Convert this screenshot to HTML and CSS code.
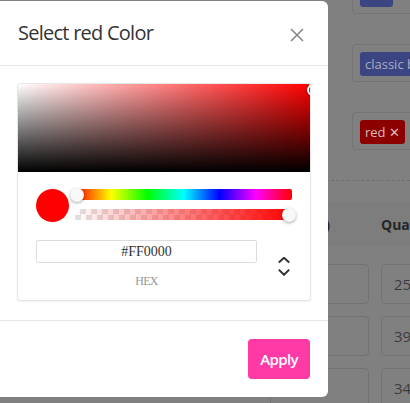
FILE: index.html
```html
<!DOCTYPE html>
<html lang="en">
<head>
<meta charset="utf-8">
<title>Select Color</title>
<link rel="stylesheet" href="styles.css">
</head>
<body>
<div class="page">
  <div class="tag-list">
    <div class="tag-card first"><span class="tag tag-blue">size</span></div>
    <div class="tag-card"><span class="tag tag-blue">classic blue</span></div>
    <div class="tag-card"><span class="tag tag-red">red ✕</span></div>
  </div>
  <div class="divider"></div>
  <div class="variant-table">
    <div class="thead">
      <div class="th">Price ($)</div>
      <div class="th">Quantity</div>
    </div>
    <div class="trow"><div class="cell"></div><div class="cell">25</div></div>
    <div class="trow"><div class="cell"></div><div class="cell">39</div></div>
    <div class="trow"><div class="cell"></div><div class="cell">34</div></div>
  </div>
</div>

<div class="modal">
  <div class="modal-header">
    <h5 class="modal-title">Select red Color</h5>
    <button class="close-btn" aria-label="Close">
      <svg width="14" height="14" viewBox="0 0 14 14"><path d="M1 1 L13 13 M13 1 L1 13" stroke="#8a8a8a" stroke-width="1.7" fill="none"/></svg>
    </button>
  </div>
  <div class="modal-body">
    <div class="picker">
      <div class="saturation"><span class="sat-cursor"></span></div>
      <div class="controls">
        <div class="slider-row">
          <div class="swatch"></div>
          <div class="sliders">
            <div class="hue"><span class="thumb thumb-left"></span></div>
            <div class="alpha"><span class="thumb thumb-right"></span></div>
          </div>
        </div>
        <div class="field-row">
          <div class="field">
            <div class="hex-input">#FF0000</div>
            <div class="hex-label">HEX</div>
          </div>
          <div class="toggle">
            <svg width="12" height="19" viewBox="0 0 12 19"><path d="M0.8 5.6 L6 0.8 L11.2 5.6 M0.8 12.6 L6 17.8 L11.2 12.6" stroke="#333" stroke-width="2" fill="none"/></svg>
          </div>
        </div>
      </div>
    </div>
  </div>
  <div class="modal-footer">
    <button class="apply-btn">Apply</button>
  </div>
</div>
</body>
</html>
```
FILE: styles.css
```css
html, body {
  margin: 0;
  padding: 0;
}
body {
  width: 410px;
  height: 403px;
  overflow: hidden;
  background: #808080;
  font-family: "Open Sans", "Liberation Sans", sans-serif;
  position: relative;
}

/* background page (seen through backdrop) */
.page {
  display: flex;
  flex-direction: column;
}
.tag-list {
  padding-left: 352px;
  display: flex;
  flex-direction: column;
  gap: 30px;
  margin-top: -25px;
}
.tag-card {
  width: 200px;
  height: 38px;
  box-sizing: border-box;
  border: 1px solid #747474;
  border-radius: 4px;
  padding: 7px;
}
.tag-card.first { height: 39px; }
.tag {
  display: inline-block;
  height: 24px;
  line-height: 24px;
  padding: 0 5px;
  border-radius: 3px;
  font-size: 13px;
  white-space: nowrap;
}
.tag-blue { background: #3b4582; color: #a7adc6; }
.tag-red { background: #8c0000; color: #d6bcbc; }
.divider {
  margin-top: 30px;
  border-top: 1px dashed #6f6f6f;
  margin-left: 250px;
}
.variant-table {
  padding-left: 270px;
  margin-top: 21px;
}
.thead {
  display: grid;
  grid-template-columns: 103px 200px;
  column-gap: 8px;
  height: 44px;
  align-items: center;
  background: #7d7d7d;
  margin-left: -270px;
  padding-left: 270px;
}
.th {
  font-weight: 700;
  font-size: 14px;
  color: #262626;
  white-space: nowrap;
}
.th:first-child { padding-left: 4px; }
.trow {
  display: grid;
  grid-template-columns: 99px 200px;
  column-gap: 12px;
  margin-top: 12px;
}
.thead + .trow { margin-top: 18px; }
.cell {
  height: 40px;
  box-sizing: border-box;
  border: 1px solid #727272;
  border-radius: 4px;
  padding-left: 12px;
  line-height: 38px;
  font-size: 15px;
  color: #3c3c3c;
}

/* modal */
.modal {
  position: absolute;
  left: 0;
  top: 1px;
  width: 328px;
  height: 396px;
  background: #fff;
  border-radius: 0 6px 6px 0;
  display: flex;
  flex-direction: column;
}
.modal-header {
  display: flex;
  align-items: center;
  padding: 17px 24px 17px 18px;
  border-bottom: 1px solid #e4e4ea;
}
.modal-title {
  margin: 0;
  font-size: 20px;
  line-height: 30px;
  font-weight: 400;
  letter-spacing: -0.75px;
  color: #333;
}
.close-btn {
  margin-left: auto;
  margin-top: 3px;
  border: 0;
  background: none;
  padding: 0;
  width: 14px;
  height: 14px;
  display: flex;
}
.modal-body {
  padding: 17px;
}
.picker {
  border: 1px solid #e6e6e6;
  border-radius: 3px;
  box-shadow: 0 1px 2px rgba(0,0,0,0.06);
  overflow: hidden;
}
.saturation {
  position: relative;
  height: 88px;
  background:
    linear-gradient(to top, #000, rgba(0,0,0,0)),
    linear-gradient(to right, #fff, #f00);
  overflow: hidden;
}
.sat-cursor {
  position: absolute;
  right: -9px;
  top: 0;
  width: 8px;
  height: 8px;
  border: 2px solid #fff;
  border-radius: 50%;
  box-shadow: 0 0 1px 1px rgba(0,0,0,0.3);
}
.controls {
  padding: 17px 18px 12px 18px;
}
.slider-row {
  display: flex;
  align-items: flex-start;
  gap: 6px;
}
.swatch {
  width: 33px;
  height: 33px;
  border-radius: 50%;
  background: #f00;
  flex: none;
}
.sliders {
  flex: 1;
  display: flex;
  flex-direction: column;
  gap: 9px;
}
.hue, .alpha {
  position: relative;
  height: 11px;
}
.hue {
  border-radius: 2px;
  background: linear-gradient(to right, #f00 0%, #ff0 16.7%, #0f0 33.3%, #0ff 50%, #00f 66.7%, #f0f 83.3%, #f00 100%);
}
.alpha {
  background:
    linear-gradient(to right, rgba(255,0,0,0), #f00),
    conic-gradient(#e2e2e2 25%, #fff 0 50%, #e2e2e2 0 75%, #fff 0);
  background-size: 100% 100%, 11px 11px;
}
.thumb {
  position: absolute;
  top: -1.5px;
  width: 14px;
  height: 14px;
  border-radius: 50%;
  background: #f8f8f8;
  box-shadow: 0 1px 3px rgba(0,0,0,0.35);
}
.thumb-left { left: -5px; }
.thumb-right { right: -4px; }
.field-row {
  display: flex;
  align-items: center;
  margin-top: 18px;
}
.field {
  width: 221px;
  display: flex;
  flex-direction: column;
  align-items: center;
}
.hex-input {
  width: 100%;
  height: 23px;
  box-sizing: border-box;
  border: 1px solid #dcdcdc;
  border-radius: 2px;
  text-align: center;
  font-family: "Liberation Serif", serif;
  font-size: 14px;
  line-height: 21px;
  color: #333;
}
.hex-label {
  margin-top: 11px;
  font-family: "Liberation Serif", serif;
  font-size: 12px;
  line-height: 14px;
  letter-spacing: -0.8px;
  color: #969696;
}
.toggle {
  margin-left: 21px;
  width: 12px;
  height: 19px;
  display: flex;
  margin-top: 4px;
}
.modal-footer {
  margin-top: auto;
  border-top: 1px solid #e4e4ea;
  padding: 18px;
  display: flex;
  justify-content: flex-end;
}
.apply-btn {
  height: 40px;
  padding: 0 12px;
  border: 0;
  border-radius: 4px;
  background: #ff3aa6;
  color: #fff;
  font-family: "Open Sans", sans-serif;
  font-size: 15px;
  font-weight: 600;
  letter-spacing: -0.6px;
}
```
